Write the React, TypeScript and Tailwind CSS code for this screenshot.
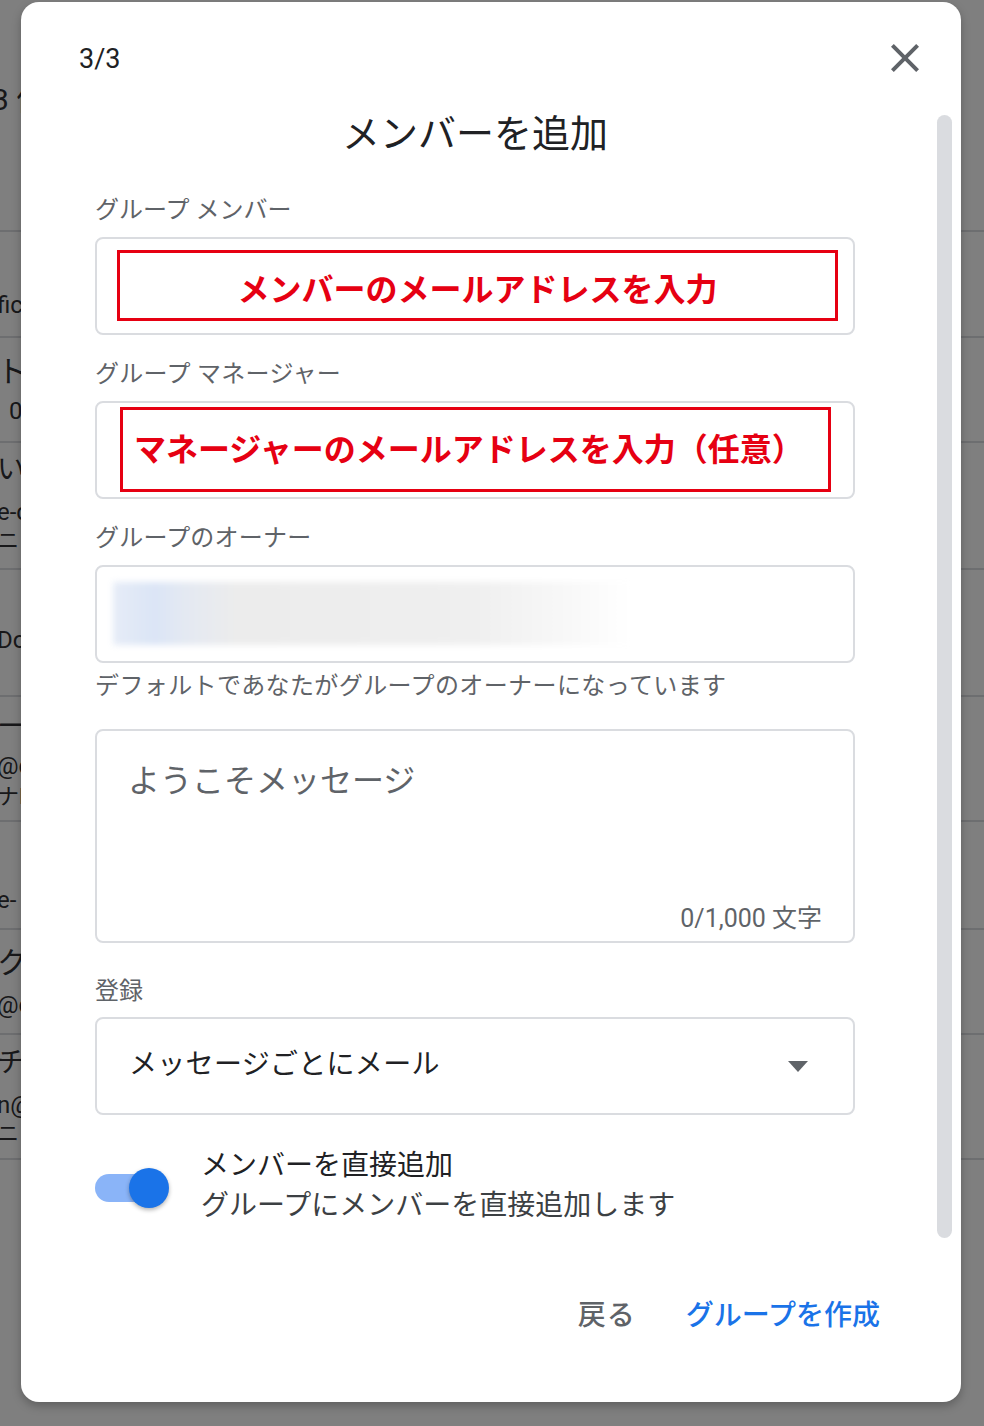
import React from "react";

function BgRow({ h, pt, lines }: { h: number; pt: number; lines: { t: string; lh: number; size: number }[] }) {
  return (
    <div className="border-b-2 border-[#dadce0] overflow-hidden" style={{ height: h, paddingTop: pt }}>
      {lines.map((l, i) => (
        <div key={i} className="whitespace-pre -ml-[3px] text-[#303134]" style={{ height: l.lh, lineHeight: `${l.lh}px`, fontSize: l.size }}>
          {l.t}
        </div>
      ))}
    </div>
  );
}

export default function App() {
  return (
    <div className="relative w-[984px] h-[1426px] overflow-hidden bg-white font-['Roboto','Noto_Sans_CJK_JP',sans-serif] text-[#202124]">
      {/* background page */}
      <div className="flex flex-col w-full">
        <div className="h-[232px] border-b-2 border-[#dadce0] overflow-hidden">
          <div className="pt-[80px] text-[30px] leading-[40px] -ml-[8px] text-[#303134] whitespace-pre">3 件</div>
        </div>
        <BgRow h={106} pt={56} lines={[{ t: "fice", lh: 34, size: 24 }]} />
        <BgRow h={105} pt={14} lines={[{ t: "ト", lh: 40, size: 30 }, { t: "  04", lh: 38, size: 24 }]} />
        <BgRow h={127} pt={7} lines={[{ t: "い", lh: 40, size: 28 }, { t: "e-c", lh: 44, size: 24 }, { t: "ニュ", lh: 14, size: 22 }]} />
        <BgRow h={127} pt={52} lines={[{ t: "Do", lh: 36, size: 24 }]} />
        <BgRow h={125} pt={10} lines={[{ t: "ー", lh: 40, size: 28 }, { t: "@c", lh: 38, size: 24 }, { t: "ナM", lh: 24, size: 22 }]} />
        <BgRow h={108} pt={60} lines={[{ t: "e-", lh: 36, size: 24 }]} />
        <BgRow h={105} pt={13} lines={[{ t: "ク", lh: 40, size: 30 }, { t: "@c", lh: 44, size: 24 }]} />
        <BgRow h={125} pt={8} lines={[{ t: "チ", lh: 40, size: 28 }, { t: "n@", lh: 44, size: 24 }, { t: "ニュ", lh: 14, size: 22 }]} />
      </div>

      {/* dim overlay */}
      <div className="absolute inset-0 bg-black/50" />

      {/* modal */}
      <div className="absolute left-[21px] top-[2px] w-[940px] h-[1400px] rounded-[18px] bg-white flex shadow-[0_4px_10px_rgba(0,0,0,0.25)]">
        <div className="flex-1 flex flex-col">
          {/* header */}
          <div className="mt-[32px] h-[48px] flex items-center justify-between pl-[58px] pr-[8px]">
            <span className="text-[27px] leading-[32px] text-[#202124] mt-[2px]">3/3</span>
            <svg width="48" height="48" viewBox="0 0 24 24">
              <path
                fill="#5f6368"
                d="M19 6.41L17.59 5 12 10.59 6.41 5 5 6.41 10.59 12 5 17.59 6.41 19 12 13.41 17.59 19 19 17.59 13.41 12z"
              />
            </svg>
          </div>

          {/* form */}
          <div className="ml-[74px] w-[760px] flex flex-col">
            <div className="mt-[28px] text-[38px] leading-[48px] text-center text-[#202124]">メンバーを追加</div>

            <div className="mt-[36px] text-[24px] leading-[32px] text-[#5f6368]">グループ メンバー</div>
            <div className="mt-[11px] h-[98px] border-2 border-[#dadce0] rounded-[8px]">
              <div className="ml-[20px] mt-[11px] w-[721px] h-[71px] border-[3px] border-[#e60012] flex items-center justify-center pt-[9px]">
                <span className="text-[32px] leading-none font-bold text-[#e60012]">メンバーのメールアドレスを入力</span>
              </div>
            </div>

            <div className="mt-[23px] text-[24px] leading-[32px] text-[#5f6368] tracking-[0.3px]">グループ マネージャー</div>
            <div className="mt-[11px] h-[98px] border-2 border-[#dadce0] rounded-[8px]">
              <div className="ml-[23px] mt-[4px] w-[711px] h-[85px] border-[3px] border-[#e60012] flex items-center pl-[11px]">
                <span className="text-[32px] leading-none font-bold text-[#e60012] whitespace-nowrap">マネージャーのメールアドレスを入力（任意）</span>
              </div>
            </div>

            <div className="mt-[23px] text-[24px] leading-[32px] text-[#5f6368] tracking-[0.2px]">グループのオーナー</div>
            <div className="mt-[11px] h-[98px] border-2 border-[#dadce0] rounded-[8px] overflow-hidden">
              <div className="ml-[16px] mt-[15px] w-[517px] h-[63px] blur-[3px] bg-[linear-gradient(90deg,#e6ecf7_0%,#dbe5f6_8%,#e4e9f2_14%,#ececec_24%,#eeeeee_55%,#efefef_70%,#f8f8f8_88%,#ffffff_100%)]" />
            </div>
            <div className="mt-[7px] text-[24px] leading-[32px] text-[#5f6368] tracking-[0.4px]">デフォルトであなたがグループのオーナーになっています</div>

            <div className="mt-[27px] h-[214px] border-2 border-[#dadce0] rounded-[8px] flex flex-col justify-between">
              <div className="pl-[31px] pt-[30px] text-[32px] leading-[40px] text-[#5f6368]">ようこそメッセージ</div>
              <div className="self-end pr-[31px] pb-[6px] text-[25px] leading-[32px] text-[#5f6368]">0/1,000 文字</div>
            </div>

            <div className="mt-[32px] text-[24px] leading-[32px] text-[#5f6368]">登録</div>
            <div className="mt-[10px] h-[98px] border-2 border-[#dadce0] rounded-[8px] flex items-center justify-between pl-[32px] pr-[45px]">
              <span className="text-[28px] leading-[36px] text-[#202124] -mt-[2px] tracking-[0.3px]">メッセージごとにメール</span>
              <svg width="20" height="11" viewBox="0 0 20 11">
                <polygon points="0,0 20,0 10,11" fill="#5f6368" />
              </svg>
            </div>

            <div className="mt-[31px] flex items-center">
              <div className="relative w-[74px] h-[40px] shrink-0 mt-[3px]">
                <div className="absolute left-0 top-[6px] w-[66px] h-[28px] rounded-full bg-[#8ab4f8]" />
                <div className="absolute left-[34px] top-0 w-[40px] h-[40px] rounded-full bg-[#1a73e8] shadow-[0_2px_4px_rgba(0,0,0,0.3)]" />
              </div>
              <div className="ml-[32px] flex flex-col">
                <span className="text-[28px] leading-[40px] text-[#202124]">メンバーを直接追加</span>
                <span className="text-[28px] leading-[40px] text-[#3c4043]">グループにメンバーを直接追加します</span>
              </div>
            </div>
          </div>

          {/* footer */}
          <div className="mt-[70px] flex justify-end items-center gap-[50px] pr-[57px]">
            <span className="text-[28px] leading-[40px] font-medium text-[#5f6368] tracking-[1px]">戻る</span>
            <span className="text-[28px] leading-[40px] font-medium text-[#1a73e8]">グループを作成</span>
          </div>
        </div>

        {/* scrollbar */}
        <div className="w-[15px] mr-[9px] pt-[113px] shrink-0">
          <div className="h-[1123px] rounded-full bg-[#dadce0]" />
        </div>
      </div>
    </div>
  );
}
